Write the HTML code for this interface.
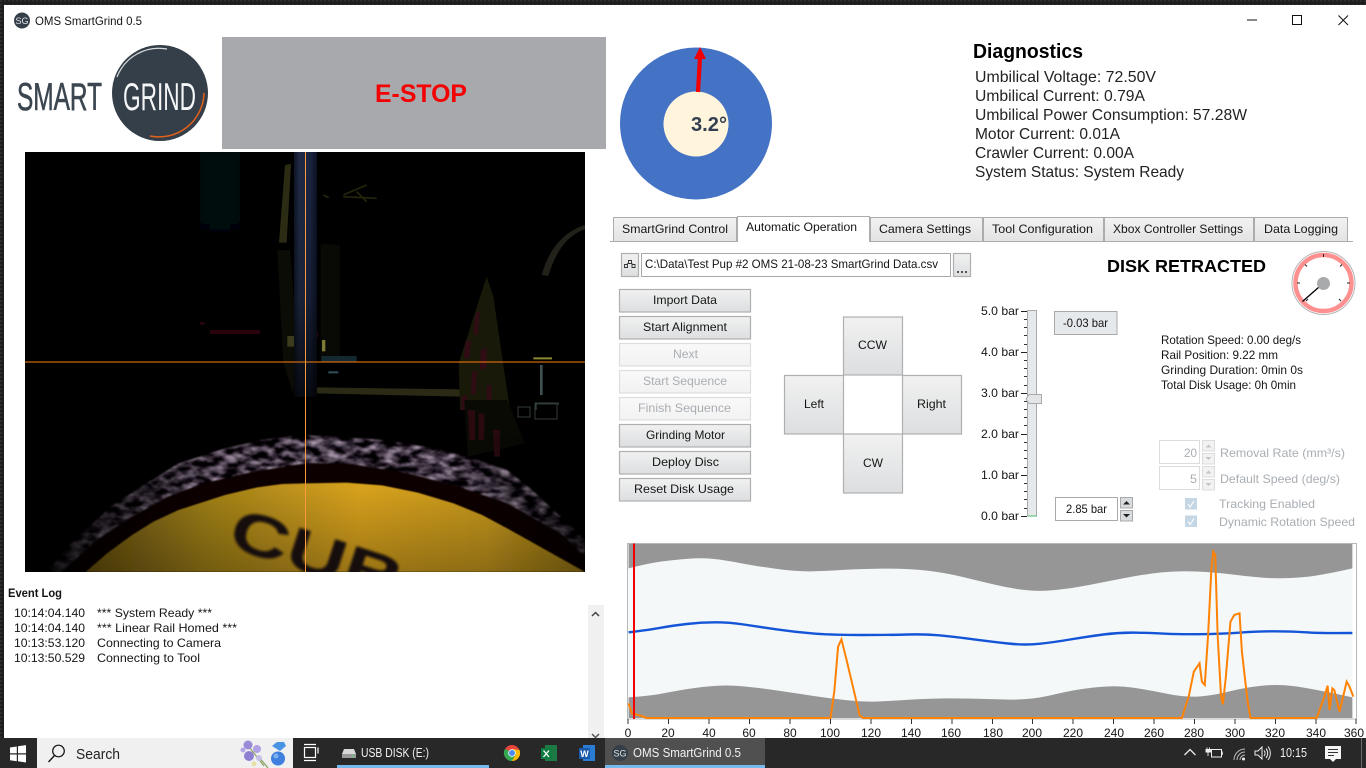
<!DOCTYPE html>
<html lang="en"><head><meta charset="utf-8"><title>OMS SmartGrind 0.5</title>
<style>
html,body{margin:0;padding:0;width:1366px;height:768px;overflow:hidden;background:#1c1c1c}
svg{display:block;position:absolute;left:0;top:0}
text{font-family:"Liberation Sans",Arial,sans-serif;font-size:12px;fill:#151515}
.d{fill:#a9aeb3}.c{text-anchor:middle}.w{fill:#f2f2f2;font-size:13px}
.btn{fill:url(#bg);stroke:#afafaf;stroke-width:1.2}
.off{fill:url(#bgo);stroke:#dedede;stroke-width:1.2}
.tab{fill:url(#tg);stroke:#acacac;stroke-width:1}
</style></head><body>
<svg width="1366" height="768" viewBox="0 0 1366 768" xmlns="http://www.w3.org/2000/svg">
<defs>
<linearGradient id="bg" x1="0" y1="0" x2="0" y2="1"><stop offset="0" stop-color="#f1f1f1"/><stop offset="1" stop-color="#dcdee0"/></linearGradient>
<linearGradient id="bgo" x1="0" y1="0" x2="0" y2="1"><stop offset="0" stop-color="#f9f9f9"/><stop offset="1" stop-color="#f2f2f2"/></linearGradient>
<linearGradient id="tg" x1="0" y1="0" x2="0" y2="1"><stop offset="0" stop-color="#f2f2f2"/><stop offset="1" stop-color="#e3e3e3"/></linearGradient>
<linearGradient id="col" x1="0" y1="0" x2="1" y2="0"><stop offset="0" stop-color="#0e1524"/><stop offset=".25" stop-color="#202b47"/><stop offset=".7" stop-color="#1a2542"/><stop offset="1" stop-color="#0c1222"/></linearGradient>
<linearGradient id="colf" x1="0" y1="0" x2="0" y2="1"><stop offset="0" stop-color="#000" stop-opacity="0"/><stop offset=".6" stop-color="#000" stop-opacity=".2"/><stop offset="1" stop-color="#000" stop-opacity=".75"/></linearGradient>
<linearGradient id="glow" x1="0" y1="0" x2="0" y2="1"><stop offset="0" stop-color="#040c10"/><stop offset=".45" stop-color="#030403"/><stop offset="1" stop-color="#000"/></linearGradient>
<linearGradient id="yel" gradientUnits="userSpaceOnUse" x1="170" y1="0" x2="1568" y2="0"><stop offset="0" stop-color="#5e4a0e"/><stop offset=".25" stop-color="#a08018"/><stop offset=".55" stop-color="#d8a21e"/><stop offset=".8" stop-color="#c4961c"/><stop offset="1" stop-color="#8a6c14"/></linearGradient>
<linearGradient id="yelv" gradientUnits="userSpaceOnUse" x1="0" y1="260" x2="0" y2="516"><stop offset="0" stop-color="#000" stop-opacity="0"/><stop offset="1" stop-color="#000" stop-opacity=".28"/></linearGradient>
<linearGradient id="fadeL" gradientUnits="userSpaceOnUse" x1="60" y1="0" x2="520" y2="0"><stop offset="0" stop-color="#000" stop-opacity=".9"/><stop offset="1" stop-color="#000" stop-opacity="0"/></linearGradient>
<linearGradient id="fadeR" gradientUnits="userSpaceOnUse" x1="1250" y1="0" x2="1568" y2="0"><stop offset="0" stop-color="#000" stop-opacity="0"/><stop offset="1" stop-color="#000" stop-opacity=".7"/></linearGradient>
<filter id="b1" x="-10%" y="-10%" width="120%" height="120%"><feGaussianBlur stdDeviation="1.2"/></filter>
<filter id="b3" x="-10%" y="-10%" width="120%" height="120%"><feGaussianBlur stdDeviation="4"/></filter>
<filter id="rope" x="-5%" y="-5%" width="110%" height="110%" color-interpolation-filters="sRGB">
<feTurbulence type="fractalNoise" baseFrequency=".025 .05" numOctaves="3" seed="7" result="n"/>
<feColorMatrix in="n" type="matrix" values="1.5 0 0 0 -.52  1.4 0 0 0 -.51  1.5 0 0 0 -.51  0 0 0 0 1" result="m"/>
<feComposite in="m" in2="SourceAlpha" operator="in" result="c"/>
<feGaussianBlur in="c" stdDeviation="2"/>
</filter>
<pattern id="strip" width="4" height="4" patternUnits="userSpaceOnUse"><rect width="4" height="4" fill="#1d1d1d"/><rect width="2" height="2" fill="#2c2c2c"/></pattern>
<clipPath id="ph"><rect x="25" y="152" width="560" height="420"/></clipPath>
</defs>

<!-- Desktop edge + window -->
<rect width="1366" height="768" fill="url(#strip)"/>
<rect x="4" y="5" width="1362" height="733" fill="#fff"/>

<!-- Title bar -->
<circle cx="22" cy="20.500" r="8" fill="#353f49"/>
<text x="22" y="24" class="c" style="font-size:9px;fill:#dfe3e6">SG</text>
<text x="35" y="25" textLength="107" lengthAdjust="spacingAndGlyphs">OMS SmartGrind 0.5</text>
<path d="M1247 20h10" stroke="#111" stroke-width="1"/>
<rect x="1292.500" y="15.500" width="9" height="9" fill="none" stroke="#111" stroke-width="1"/>
<path d="M1338.500 15.500l9.500 9.500M1348 15.500l-9.500 9.500" stroke="#111" stroke-width="1"/>

<!-- Logo -->
<text x="17" y="110" textLength="85" lengthAdjust="spacingAndGlyphs" style="font-size:39px;fill:#3c4650;stroke:#3c4650;stroke-width:.6">SMART</text>
<circle cx="160" cy="93" r="48" fill="#353f49"/>
<text x="123" y="110" textLength="73" lengthAdjust="spacingAndGlyphs" style="font-size:39px;fill:#f4f5f6">GRIND</text>
<path d="M117 77A45 45 0 0 1 167 49" fill="none" stroke="#d8dcdf" stroke-width="1.200"/>
<path d="M204 93A45 45 0 0 1 150 136" fill="none" stroke="#e2601a" stroke-width="1.500"/>

<!-- E-STOP -->
<rect x="222" y="37" width="384" height="112" fill="#a7a9ac"/>
<text x="375" y="102" textLength="92" lengthAdjust="spacingAndGlyphs" style="font-size:25px;font-weight:bold;fill:#f40000">E-STOP</text>

<!-- Camera image -->
<g clip-path="url(#ph)">
<rect x="25" y="152" width="560" height="420" fill="#000"/>
<rect x="200" y="152" width="40" height="240" fill="url(#glow)" filter="url(#b3)"/>
<g transform="translate(200 150) scale(.33333)">
<path d="M232 300L270 300 290 560 280 730 250 640z" fill="#0c0c06"/>
<path d="M255 45L273 42 260 278 237 278z" fill="#2c2c15"/>
<path d="M362 280L420 285 420 620 362 640z" fill="#090905"/>
<path d="M350 712L780 718 780 740 350 730z" fill="#2a2a15"/>
<path d="M860 380L880 440 930 780 780 780 776 640z" fill="#191909"/>
<path d="M826 490l14-6-6 70-14 0zM796 575l18-5-6 55-16 0zM842 600l18-8 0 60-20 8zM815 668l16-6-4 70-14 0zM860 708l14-4 2 65-14 0zM785 740l16-6 0 46-18 0z" fill="#300c14"/>
<path d="M1025 375C1045 300 1090 245 1155 225L1155 238C1100 255 1065 310 1045 378z" fill="#22221a"/>
<path d="M430 135l70-30M370 135l16 8M430 140l100 5M470 125l30 30" stroke="#26260c" stroke-width="5" fill="none"/>
<path d="M30 540h150v12H30zM0 516h14v8H0z" fill="#2a040c"/>
<path d="M290 548h62v14h-62z" fill="#8e1230"/>
<path d="M262 558h26v32h-26z" fill="#3c3c1c"/>
<path d="M366 570h10v34h-10z" fill="#7c7c34"/>
<path d="M364 618h106v18H364z" fill="#142830"/>
<path d="M385 664h30v6h-30z" fill="#30505a"/>
<path d="M1000 622h56v6h-56z" fill="#8a8a2c"/>
<path d="M1020 645h8v90h-8z" fill="#3e5254"/>
<path d="M1005 758h72v5h-72zM1005 758h5v22h-5z" fill="#344444"/>
</g>
<rect x="294" y="152" width="23" height="245" fill="url(#col)"/>
<rect x="294" y="152" width="23" height="245" fill="url(#colf)"/>
<path d="M518 407h12v10h-12zM535 403h22v16h-22z" fill="none" stroke="#333b36" stroke-width="1"/>
<g transform="translate(25 400) scale(.35714 .33333)">
<path d="M1230 0H1350L1400 130 1240 170z" fill="#0a0a05"/>
<path d="M1240 30l20 0 0 90-16 0zM1270 40l16 0 0 80-16 0zM1310 90l20 0 0 80-16 0z" fill="#2a0a0e"/>
<path d="M60 516L130 430 240 320 340 250 430 190 560 145 660 120 770 105 880 110 1000 120 1120 140 1240 170 1350 210 1420 270 1500 350 1568 420V516z" fill="#070605" filter="url(#b1)"/>
<path d="M60 516L130 430 240 320 340 250 430 190 560 145 660 120 770 105 880 110 1000 120 1120 140 1240 170 1350 210 1420 270 1500 350 1568 420V470L1500 400 1350 310 1200 255 1050 215 900 190 785 190 640 215 500 250 400 290 300 350 200 420 130 490 100 516z" fill="#463c3c" filter="url(#rope)"/>
<rect x="0" y="0" width="520" height="516" fill="url(#fadeL)"/>
<rect x="1250" y="100" width="318" height="416" fill="url(#fadeR)"/>
<path d="M170 516L230 460 300 405 360 365 430 330 560 285 650 262 720 252 785 250 900 248 1000 256 1100 278 1200 310 1280 345 1350 385 1450 445 1568 516z" fill="url(#yel)" filter="url(#b1)"/>
<path d="M170 516L230 460 300 405 360 365 430 330 560 285 650 262 720 252 785 250 900 248 1000 256 1100 278 1200 310 1280 345 1350 385 1450 445 1568 516z" fill="url(#yelv)"/>
</g>
<text x="226" y="546" transform="rotate(18 226 546)" textLength="178" lengthAdjust="spacingAndGlyphs" filter="url(#b1)" style="font-size:58px;font-weight:bold;fill:#15100a">CUB</text>
<path d="M25 362h560" stroke="#ff7f10" stroke-width="1"/>
<path d="M305.500 152v420" stroke="#ff9a40" stroke-width="1"/>
</g>

<!-- Event log -->
<text x="8" y="597" textLength="54" lengthAdjust="spacingAndGlyphs" style="font-weight:bold">Event Log</text>
<text x="14" y="617" textLength="71" lengthAdjust="spacingAndGlyphs">10:14:04.140</text>
<text x="97" y="617" textLength="115" lengthAdjust="spacingAndGlyphs">*** System Ready ***</text>
<text x="14" y="632" textLength="71" lengthAdjust="spacingAndGlyphs">10:14:04.140</text>
<text x="97" y="632" textLength="140" lengthAdjust="spacingAndGlyphs">*** Linear Rail Homed ***</text>
<text x="14" y="647" textLength="71" lengthAdjust="spacingAndGlyphs">10:13:53.120</text>
<text x="97" y="647" textLength="124" lengthAdjust="spacingAndGlyphs">Connecting to Camera</text>
<text x="14" y="662" textLength="71" lengthAdjust="spacingAndGlyphs">10:13:50.529</text>
<text x="97" y="662" textLength="103" lengthAdjust="spacingAndGlyphs">Connecting to Tool</text>
<rect x="588" y="605" width="16" height="133" fill="#f0f0f0"/>
<path d="M592 616l3.500-3.500 3.500 3.500" fill="none" stroke="#444" stroke-width="1.500"/>
<path d="M592 734l3.500 3.500 3.500-3.500" fill="none" stroke="#555" stroke-width="1.500"/>

<!-- Angle gauge -->
<circle cx="696" cy="123.500" r="76" fill="#4472c4"/>
<circle cx="696" cy="124" r="32.500" fill="#fff4dc"/>
<text x="691" y="131" textLength="36" lengthAdjust="spacingAndGlyphs" style="font-size:20px;font-weight:bold;fill:#333f50">3.2°</text>
<path d="M698 92L700 57" stroke="#f00000" stroke-width="4.200"/>
<path d="M700 47l6 12h-12z" fill="#f00000"/>

<!-- Diagnostics -->
<text x="973" y="58" textLength="110" lengthAdjust="spacingAndGlyphs" style="font-size:20px;font-weight:bold;fill:#000">Diagnostics</text>
<text x="975" y="82" textLength="181" lengthAdjust="spacingAndGlyphs" style="font-size:16px;fill:#222">Umbilical Voltage: 72.50V</text>
<text x="975" y="101" textLength="170" lengthAdjust="spacingAndGlyphs" style="font-size:16px;fill:#222">Umbilical Current: 0.79A</text>
<text x="975" y="120" textLength="272" lengthAdjust="spacingAndGlyphs" style="font-size:16px;fill:#222">Umbilical Power Consumption: 57.28W</text>
<text x="975" y="139" textLength="145" lengthAdjust="spacingAndGlyphs" style="font-size:16px;fill:#222">Motor Current: 0.01A</text>
<text x="975" y="158" textLength="159" lengthAdjust="spacingAndGlyphs" style="font-size:16px;fill:#222">Crawler Current: 0.00A</text>
<text x="975" y="177" textLength="209" lengthAdjust="spacingAndGlyphs" style="font-size:16px;fill:#222">System Status: System Ready</text>

<!-- Tabs -->
<path d="M610 241.500H1353" stroke="#acacac" stroke-width="1"/>
<rect x="613.500" y="217.500" width="123" height="24" class="tab"/>
<rect x="870.500" y="217.500" width="112" height="24" class="tab"/>
<rect x="983.500" y="217.500" width="120" height="24" class="tab"/>
<rect x="1104.500" y="217.500" width="149" height="24" class="tab"/>
<rect x="1254.500" y="217.500" width="93" height="24" class="tab"/>
<path d="M737.500 242V216.500H869.500V242" fill="#fff" stroke="#acacac"/>
<rect x="738" y="240" width="131" height="3" fill="#fff"/>
<text x="622" y="233" textLength="106" lengthAdjust="spacingAndGlyphs">SmartGrind Control</text>
<text x="746" y="231" textLength="111" lengthAdjust="spacingAndGlyphs">Automatic Operation</text>
<text x="879" y="233" textLength="92" lengthAdjust="spacingAndGlyphs">Camera Settings</text>
<text x="992" y="233" textLength="101" lengthAdjust="spacingAndGlyphs">Tool Configuration</text>
<text x="1113" y="233" textLength="130" lengthAdjust="spacingAndGlyphs">Xbox Controller Settings</text>
<text x="1264" y="233" textLength="74" lengthAdjust="spacingAndGlyphs">Data Logging</text>

<!-- File path -->
<rect x="621.500" y="253.500" width="17" height="23" class="btn"/>
<path d="M624.500 264.500h3v3h-3zM632 264.500h3v3h-3zM628.500 260.500h3v3h-3zM627 264l2-1M631.500 263l1 1.500" fill="none" stroke="#333" stroke-width=".9"/>
<rect x="641.500" y="253.500" width="309" height="23" fill="#fff" stroke="#a9a9a9"/>
<text x="645" y="268" textLength="293" lengthAdjust="spacingAndGlyphs">C:\Data\Test Pup #2 OMS 21-08-23 SmartGrind Data.csv</text>
<rect x="953.500" y="253.500" width="17" height="23" class="btn"/>
<path d="M957 272h2M961 272h2M965 272h2" stroke="#222" stroke-width="1.500"/>

<!-- Buttons -->
<rect x="619.500" y="289.500" width="131" height="22.500" class="btn"/>
<rect x="619.500" y="316.500" width="131" height="22.500" class="btn"/>
<rect x="619.500" y="343.500" width="131" height="22.500" class="off"/>
<rect x="619.500" y="370.500" width="131" height="22.500" class="off"/>
<rect x="619.500" y="397.500" width="131" height="22.500" class="off"/>
<rect x="619.500" y="424.500" width="131" height="22.500" class="btn"/>
<rect x="619.500" y="451.500" width="131" height="22.500" class="btn"/>
<rect x="619.500" y="478.500" width="131" height="22.500" class="btn"/>
<text x="653" y="304" textLength="64" lengthAdjust="spacingAndGlyphs">Import Data</text>
<text x="643" y="331" textLength="84" lengthAdjust="spacingAndGlyphs">Start Alignment</text>
<text x="673" y="358" textLength="25" lengthAdjust="spacingAndGlyphs" class="d">Next</text>
<text x="643" y="385" textLength="84" lengthAdjust="spacingAndGlyphs" class="d">Start Sequence</text>
<text x="638" y="412" textLength="93" lengthAdjust="spacingAndGlyphs" class="d">Finish Sequence</text>
<text x="646" y="439" textLength="79" lengthAdjust="spacingAndGlyphs">Grinding Motor</text>
<text x="652" y="466" textLength="67" lengthAdjust="spacingAndGlyphs">Deploy Disc</text>
<text x="634" y="493" textLength="100" lengthAdjust="spacingAndGlyphs">Reset Disk Usage</text>

<!-- D-pad -->
<rect x="843.500" y="317" width="59" height="58" class="btn"/>
<rect x="784.500" y="375.500" width="59" height="58.500" class="btn"/>
<rect x="902.500" y="375.500" width="59" height="58.500" class="btn"/>
<rect x="843.500" y="434" width="59" height="59" class="btn"/>
<text x="858" y="349" textLength="29" lengthAdjust="spacingAndGlyphs">CCW</text>
<text x="804" y="408" textLength="20" lengthAdjust="spacingAndGlyphs">Left</text>
<text x="917" y="408" textLength="29" lengthAdjust="spacingAndGlyphs">Right</text>
<text x="863" y="467" textLength="20" lengthAdjust="spacingAndGlyphs">CW</text>

<!-- Slider -->
<text x="981" y="315" textLength="38" lengthAdjust="spacingAndGlyphs">5.0 bar</text>
<text x="981" y="356" textLength="38" lengthAdjust="spacingAndGlyphs">4.0 bar</text>
<text x="981" y="397" textLength="38" lengthAdjust="spacingAndGlyphs">3.0 bar</text>
<text x="981" y="438" textLength="38" lengthAdjust="spacingAndGlyphs">2.0 bar</text>
<text x="981" y="479" textLength="38" lengthAdjust="spacingAndGlyphs">1.0 bar</text>
<text x="981" y="520" textLength="38" lengthAdjust="spacingAndGlyphs">0.0 bar</text>
<path d="M1021 311.500h6M1021 352.500h6M1021 393.500h6M1021 434.500h6M1021 475.500h6M1021 516.500h6" stroke="#222"/>
<path d="M1024 319.500h3M1024 327.500h3M1024 335.500h3M1024 344.500h3M1024 360.500h3M1024 368.500h3M1024 376.500h3M1024 385.500h3M1024 401.500h3M1024 409.500h3M1024 417.500h3M1024 425.500h3M1024 442.500h3M1024 450.500h3M1024 458.500h3M1024 467.500h3M1024 483.500h3M1024 491.500h3M1024 499.500h3M1024 508.500h3" stroke="#333"/>
<rect x="1027.500" y="310.500" width="9" height="205.500" fill="#e6e9ec" stroke="#a9a9a9"/>
<path d="M1028 516h9" stroke="#49b96a" stroke-width="1"/>
<path d="M1029 394.500H1041.500V403.500H1029L1026 399z" fill="#e3e5e7" stroke="#a9a9a9"/>
<rect x="1054.500" y="311.500" width="62.500" height="23" fill="#e6e9ec" stroke="#a9a9a9"/>
<text x="1063" y="327" textLength="45" lengthAdjust="spacingAndGlyphs">-0.03 bar</text>
<rect x="1055.500" y="497.500" width="62" height="23" fill="#fff" stroke="#a9a9a9"/>
<text x="1066" y="513" textLength="41" lengthAdjust="spacingAndGlyphs">2.85 bar</text>
<rect x="1120.500" y="497.500" width="12" height="10.500" fill="#d9dcde" stroke="#a9a9a9"/>
<rect x="1120.500" y="510.500" width="12" height="10.500" fill="#d9dcde" stroke="#a9a9a9"/>
<path d="M1123 504.500l3.500-3.500 3.500 3.500zM1123 514l3.500 3.500 3.500-3.500z" fill="#222"/>

<!-- Disk status -->
<text x="1107" y="272" textLength="159" lengthAdjust="spacingAndGlyphs" style="font-size:17.500px;font-weight:bold;fill:#000">DISK RETRACTED</text>
<circle cx="1323.500" cy="283" r="31.500" fill="#fff" stroke="#b4b4b4" stroke-width="1"/>
<circle cx="1323.500" cy="283" r="28" fill="#fff" stroke="#ff9090" stroke-width="4.500"/>
<path d="M1323.500 257v-3M1305 264.500l2 2M1342 264.500l-2 2M1297 283h3M1347 283h3M1306 301l2-2M1341 301l-2-2" stroke="#222" stroke-width="1"/>
<path d="M1319 287L1302.500 301.500" stroke="#000" stroke-width="1.300"/>
<circle cx="1323.500" cy="283.500" r="6.500" fill="#a9aaac"/>
<text x="1161" y="344" textLength="140" lengthAdjust="spacingAndGlyphs">Rotation Speed: 0.00 deg/s</text>
<text x="1161" y="359" textLength="117" lengthAdjust="spacingAndGlyphs">Rail Position: 9.22 mm</text>
<text x="1161" y="374" textLength="142" lengthAdjust="spacingAndGlyphs">Grinding Duration: 0min 0s</text>
<text x="1161" y="389" textLength="135" lengthAdjust="spacingAndGlyphs">Total Disk Usage: 0h 0min</text>

<!-- Disabled settings -->
<rect x="1159.500" y="440.500" width="40" height="23" fill="#fff" stroke="#dcdcdc"/>
<rect x="1159.500" y="466.500" width="40" height="23" fill="#fff" stroke="#dcdcdc"/>
<text x="1184" y="457" textLength="13" lengthAdjust="spacingAndGlyphs" class="d">20</text>
<text x="1190" y="483" textLength="7" lengthAdjust="spacingAndGlyphs" class="d">5</text>
<rect x="1202.500" y="440.500" width="12" height="10.500" fill="#f2f2f2" stroke="#dcdcdc"/>
<rect x="1202.500" y="453.500" width="12" height="10.500" fill="#f2f2f2" stroke="#dcdcdc"/>
<rect x="1202.500" y="466.500" width="12" height="10.500" fill="#f2f2f2" stroke="#dcdcdc"/>
<rect x="1202.500" y="479.500" width="12" height="10.500" fill="#f2f2f2" stroke="#dcdcdc"/>
<path d="M1205.500 447.500l3-3 3 3zM1205.500 457l3 3 3-3zM1205.500 473.500l3-3 3 3zM1205.500 483l3 3 3-3z" fill="#c4c4c4"/>
<text x="1220" y="457" textLength="125" lengthAdjust="spacingAndGlyphs" class="d">Removal Rate (mm³/s)</text>
<text x="1220" y="483" textLength="120" lengthAdjust="spacingAndGlyphs" class="d">Default Speed (deg/s)</text>
<rect x="1185" y="498" width="12" height="11.500" fill="#c5d6e4"/>
<rect x="1185" y="515.500" width="12" height="11.500" fill="#c5d6e4"/>
<path d="M1188 504l2 3 4-6M1188 521.500l2 3 4-6" fill="none" stroke="#fff" stroke-width="1.100"/>
<text x="1219" y="508" textLength="96" lengthAdjust="spacingAndGlyphs" class="d">Tracking Enabled</text>
<text x="1219" y="526" textLength="136" lengthAdjust="spacingAndGlyphs" class="d">Dynamic Rotation Speed</text>

<!-- Chart -->
<rect x="627.500" y="543.500" width="729" height="175.500" fill="#fff" stroke="#b4b8ba" stroke-width="1"/>
<g transform="translate(620 535) scale(.47619 .33333)">
<rect x="18" y="27" width="1520" height="522" fill="#f4f8f9"/>
<path d="M18 27H1538V100Q1470 122 1435 126.500Q1400 131 1370 129.500Q1340 128 1295 120Q1250 112 1210 109.500Q1170 107 1135 112.500Q1100 118 1060 129Q1020 140 985 150Q950 160 915 165Q880 170 850 165Q820 160 790 150Q760 140 720 126Q680 112 640 106Q600 100 550 101Q500 102 465 105Q430 108 400 109Q370 110 325 101Q280 92 250 83.500Q220 75 195 71.500Q170 68 140 71.500Q110 75 85 80Q60 85 18 100z" fill="#969696"/>
<path d="M18 549H1538V487Q1450 460 1415 453.500Q1380 447 1345 452.500Q1310 458 1280 469Q1250 480 1220 484Q1190 488 1150 476.500Q1110 465 1075 457.500Q1040 450 995 457.500Q950 465 915 477.500Q880 490 850 492.500Q820 495 780 492.500Q740 490 695 490Q650 490 610 494Q570 498 540 499.500Q510 501 475 495.500Q440 490 405 482.500Q370 475 330 466.500Q290 458 260 454Q230 450 200 452.500Q170 455 140 462.500Q110 470 85 476.500Q60 483 18 487z" fill="#969696"/>
<path d="M18 292Q60 285 85 278.500Q110 272 140 267Q170 262 200 262Q230 262 260 268.500Q290 275 330 283.500Q370 292 410 296Q450 300 510 300Q570 300 605 298.500Q640 297 670 301Q700 305 740 312.500Q780 320 815 325.500Q850 331 880 326.500Q910 322 945 313.500Q980 305 1015 298.500Q1050 292 1085 293Q1120 294 1145 296Q1170 298 1215 297.500Q1260 297 1300 293Q1340 289 1375 289Q1410 289 1440 292Q1470 295 1538 294" fill="none" stroke="#1455d8" stroke-width="2.400" vector-effect="non-scaling-stroke"/>
<path d="M18 505L25 535 50 545 55 549H442L450 470 458 335 465 313 475 370 490 460 503 540 510 549H1180L1195 480 1205 410 1217 385 1222 440 1228 450 1235 300 1242 100 1246 50 1250 60 1255 300 1262 480 1266 508 1272 430 1282 260 1290 240 1301 235 1306 350 1318 500 1324 549H1463L1478 490 1486 452 1490 525 1496 460 1500 465 1511 530 1526 440 1532 455 1540 485" fill="none" stroke="#ff8205" stroke-width="2" vector-effect="non-scaling-stroke"/>
</g>
<path d="M634 543.500V719" stroke="#f00000" stroke-width="2"/>
<path d="M628 719v5M668.500 719v5M709 719v5M749.500 719v5M790 719v5M830.500 719v5M871 719v5M911.500 719v5M952 719v5M992.500 719v5M1032.500 719v5M1073 719v5M1113.500 719v5M1154 719v5M1194.500 719v5M1235 719v5M1275.500 719v5M1316 719v5M1356 719v5" stroke="#333" stroke-width="1"/>
<text x="628" y="737" class="c">0</text><text x="668" y="737" class="c">20</text><text x="709" y="737" class="c">40</text><text x="749" y="737" class="c">60</text><text x="790" y="737" class="c">80</text><text x="830" y="737" class="c">100</text><text x="871" y="737" class="c">120</text><text x="911" y="737" class="c">140</text><text x="951" y="737" class="c">160</text><text x="993" y="737" class="c">180</text><text x="1032" y="737" class="c">200</text><text x="1073" y="737" class="c">220</text><text x="1114" y="737" class="c">240</text><text x="1154" y="737" class="c">260</text><text x="1194" y="737" class="c">280</text><text x="1235" y="737" class="c">300</text><text x="1275" y="737" class="c">320</text><text x="1316" y="737" class="c">340</text><text x="1354" y="737" class="c">360</text>

<!-- Taskbar -->
<rect x="0" y="738" width="1366" height="30" fill="#282828"/>
<path d="M10 747.500l6.800-1v6.800H10zM18 746.300l8-1.200v8.200h-8zM10 754.500h6.800v6.800l-6.800-1zM18 754.500h8v8l-8-1.200z" fill="#fff"/>
<rect x="37" y="738" width="256" height="30" fill="#f0f0f0"/>
<circle cx="58.500" cy="751" r="5.800" fill="none" stroke="#111" stroke-width="1.200"/>
<path d="M54.500 755.500L48.500 762" stroke="#111" stroke-width="1.300"/>
<text x="76" y="759" textLength="44" lengthAdjust="spacingAndGlyphs" style="font-size:14.500px;fill:#222">Search</text>
<path d="M250 748L264 766M258 756L268 768" stroke="#8aa060" stroke-width="1.200"/>
<circle cx="248" cy="745" r="4.500" fill="#9a8ad8"/><circle cx="257" cy="749" r="4" fill="#b0a0e4"/><circle cx="249" cy="756" r="5" fill="#8f7fd2"/><circle cx="259" cy="758" r="3" fill="#c7bfe8"/><circle cx="243" cy="750" r="2.500" fill="#b4a8e4"/><circle cx="254" cy="764" r="2.500" fill="#e8dfa8"/>
<path d="M272 746l5-4h7l2 4-6 5z" fill="#4a94e4"/>
<circle cx="278" cy="758.500" r="7" fill="#3f7fe0"/><circle cx="276" cy="756" r="2.500" fill="#7fb0f0"/>
<rect x="304.500" y="747.500" width="11" height="10" fill="none" stroke="#fff" stroke-width="1.200"/>
<path d="M304 744.500h12M304 760.500h12M318 747.500v6" stroke="#fff" stroke-width="1.200"/>

<rect x="337" y="765" width="152" height="3" fill="#76b9ed"/>
<path d="M344 749h10l2 5v4h-14v-4z" fill="#d8d8d8"/><rect x="342" y="754" width="14" height="4" fill="#9a9a9a"/><rect x="352" y="755.500" width="2" height="1.500" fill="#5fd07a"/>
<text x="361" y="757" textLength="68" lengthAdjust="spacingAndGlyphs" class="w">USB DISK (E:)</text>

<!-- Chrome -->
<circle cx="512" cy="753" r="8" fill="#e8453c"/>
<path d="M505 749A8 8 0 0 0 512 761L516 754z" fill="#34a853"/>
<path d="M519.500 750A8 8 0 0 1 512 761L516 754 512 749z" fill="#fbbc05"/>
<circle cx="512" cy="753" r="3.800" fill="#fff"/><circle cx="512" cy="753" r="3" fill="#4a8af4"/>
<!-- Excel -->
<rect x="545" y="745" width="12" height="16" fill="#1d7a45"/><rect x="541" y="748" width="11" height="11" fill="#107c41"/>
<path d="M543.500 750.500l5.500 6.500M549 750.500l-5.500 6.500" stroke="#fff" stroke-width="1.300"/>
<!-- Word -->
<rect x="583" y="745" width="12" height="16" fill="#2b7cd3"/><rect x="579" y="748" width="11" height="11" fill="#1a5aad"/>
<text x="584.500" y="757" class="c" style="font-size:9px;font-weight:bold;fill:#fff">W</text>

<rect x="605" y="738" width="160" height="30" fill="#505050"/>
<rect x="605" y="765" width="160" height="3" fill="#76b9ed"/>
<circle cx="620" cy="753" r="8" fill="#353f49"/>
<text x="620" y="756.500" class="c" style="font-size:9px;fill:#dfe3e6">SG</text>
<text x="633" y="757" textLength="108" lengthAdjust="spacingAndGlyphs" class="w">OMS SmartGrind 0.5</text>

<!-- Tray -->
<path d="M1184.500 755l5.500-5.500 5.500 5.500" fill="none" stroke="#eee" stroke-width="1.300"/>
<rect x="1211.500" y="749.500" width="10" height="7.500" fill="none" stroke="#eee" stroke-width="1"/><path d="M1222 751.500v3.500" stroke="#eee" stroke-width="1.500"/>
<path d="M1208 750v6M1207 749.500v-2M1209.500 749.500v-2M1206 749.500h4.500v2.500h-4.500z" fill="#eee" stroke="#eee" stroke-width=".9"/>
<path d="M1234 760A11 11 0 0 1 1245 749M1237 760A8 8 0 0 1 1245 752M1240 760A5 5 0 0 1 1245 755" fill="none" stroke="#bbb" stroke-width="1"/>
<circle cx="1243.500" cy="759" r="1.500" fill="#eee"/>
<path d="M1255 751h3l4-4v12l-4-4h-3z" fill="none" stroke="#eee" stroke-width="1"/>
<path d="M1264 750.500a4 4 0 0 1 0 5.500M1266 748.500a7.500 7.500 0 0 1 0 9.500M1268 746.500a11 11 0 0 1 0 13.500" fill="none" stroke="#eee" stroke-width="1"/>
<text x="1280" y="757" textLength="27" lengthAdjust="spacingAndGlyphs" class="w">10:15</text>
<path d="M1325 746h16v13h-5l-3 3-3-3h-5z" fill="#f4f4f4"/>
<path d="M1328 749.500h10M1328 752.500h10M1328 755.500h6" stroke="#333" stroke-width="1"/>
<path d="M1361.500 738v30" stroke="#6a6a6a" stroke-width="1"/>
</svg>
</body></html>
